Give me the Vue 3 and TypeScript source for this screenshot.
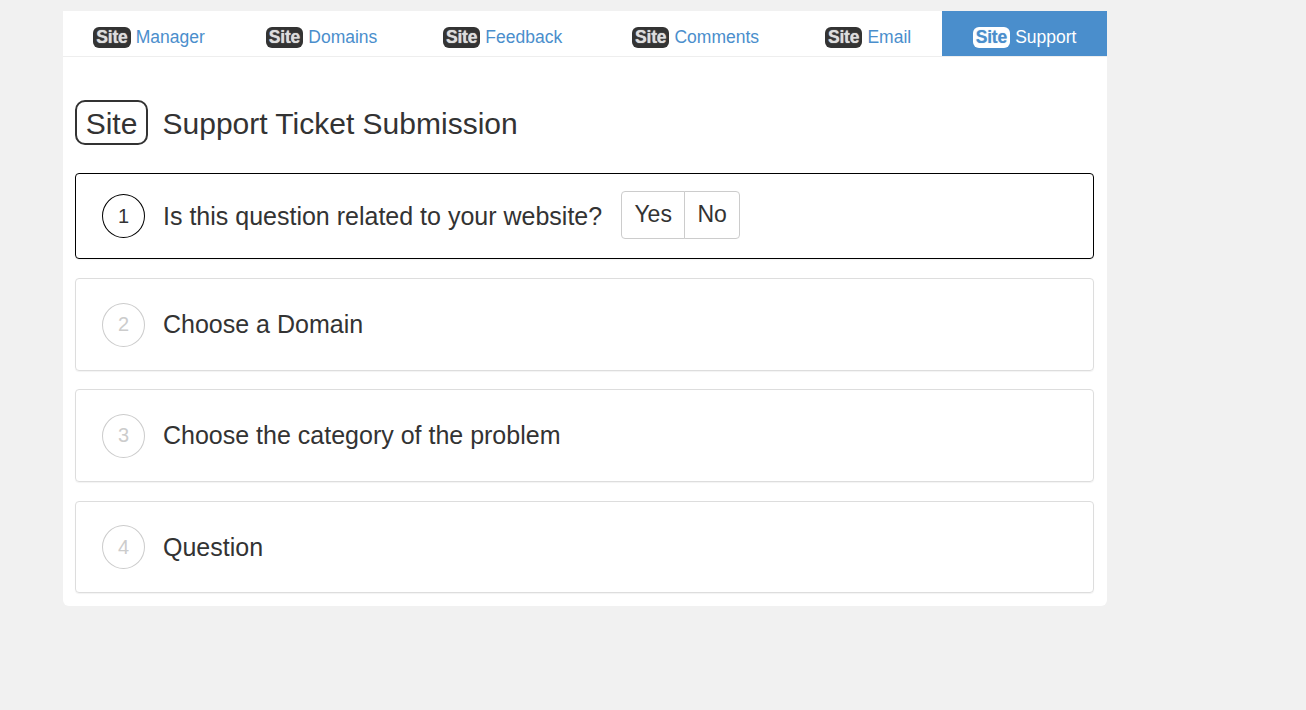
<script setup lang="ts">
const tabs = [
  { name: 'Manager', active: false },
  { name: 'Domains', active: false },
  { name: 'Feedback', active: false },
  { name: 'Comments', active: false },
  { name: 'Email', active: false },
  { name: 'Support', active: true },
]
const steps = [
  { n: 2, text: 'Choose a Domain' },
  { n: 3, text: 'Choose the category of the problem' },
  { n: 4, text: 'Question' },
]
</script>

<template>
  <div class="page">
    <main class="card">
      <nav class="tabs">
        <a v-for="t in tabs" :key="t.name" class="tab" :class="{ active: t.active }">
          <span class="badge">Site</span>
          <span>{{ t.name }}</span>
        </a>
      </nav>
      <div class="body">
        <h1 class="title"><span class="logo">Site</span><span class="title-text">Support Ticket Submission</span></h1>
        <section class="step current">
          <span class="num">1</span>
          <span class="label">Is this question related to your website?</span>
          <div class="choices">
            <button class="choice">Yes</button>
            <button class="choice">No</button>
          </div>
        </section>
        <section v-for="s in steps" :key="s.n" class="step">
          <span class="num">{{ s.n }}</span>
          <span class="label">{{ s.text }}</span>
        </section>
      </div>
    </main>
  </div>
</template>

<style>
html, body { margin: 0; background: #f1f1f1; }
</style>

<style scoped>
.page {
  height: 710px;
  box-sizing: border-box;
  padding: 11px 199px 0 63px;
  font-family: "Liberation Sans", Arial, sans-serif;
  color: #333;
}
.card {
  background: #fff;
  border-radius: 0 0 6px 6px;
  height: 595px;
  box-sizing: border-box;
}
.tabs {
  display: grid;
  grid-template-columns: 172px 173px 189px 197px 148px 165px;
  height: 46px;
  box-sizing: border-box;
  border-bottom: 1px solid #eee;
}
.tab {
  height: 45px;
  display: flex;
  align-items: center;
  justify-content: center;
  gap: 5px;
  font-size: 17.5px;
  color: #4a8ecc;
  padding-top: 7px;
  box-sizing: border-box;
}
.tab.active { background: #4a8ecc; color: #fff; }
.badge {
  display: block;
  width: 37.6px;
  height: 21px;
  line-height: 21px;
  text-align: center;
  background: #333;
  color: #ddd;
  border-radius: 6px;
  font-weight: 700;
  letter-spacing: -0.2px;
  text-shadow: 0 0 1px rgba(255, 255, 255, .7);
}
.active .badge { background: #fff; color: #4a8ecc; text-shadow: 0 0 1px rgba(74, 142, 204, .5); }
.body { padding: 43px 13px 0 12px; }
.title {
  margin: 0 0 28px;
  display: flex;
  align-items: center;
  gap: 14.5px;
  height: 45px;
  font-size: 30px;
  font-weight: 400;
}
.title-text { padding-top: 2px; }
.logo {
  width: 73px;
  height: 45px;
  box-sizing: border-box;
  border: 2px solid #333;
  border-radius: 10px;
  padding-top: 2px;
  display: flex;
  align-items: center;
  justify-content: center;
}
.step {
  height: 92.5px;
  box-sizing: border-box;
  border: 1px solid #ddd;
  border-radius: 4px;
  box-shadow: 0 1px 1px rgba(0, 0, 0, .05);
  margin-bottom: 18.9px;
  padding: 0.6px 0 0 26px;
  display: flex;
  align-items: center;
  font-size: 25px;
  color: #333;
}
.step.current {
  height: 86px;
  padding-top: 0;
  border-color: #000;
  margin-bottom: 19px;
}
.num {
  width: 43px;
  height: 44px;
  box-sizing: border-box;
  border: 1px solid #ccc;
  border-radius: 50%;
  color: #ccc;
  font-size: 20px;
  display: flex;
  align-items: center;
  justify-content: center;
  margin-right: 18px;
}
.current .num { border-color: #000; color: #333; }
.choices { display: flex; margin-left: 19px; margin-top: -2px; }
.choice {
  height: 48px;
  box-sizing: border-box;
  background: #fff;
  border: 1px solid #ccc;
  font: inherit;
  font-size: 23px;
  color: #333;
  padding: 0 0 2px;
}
.choice:first-child { border-radius: 4px 0 0 4px; width: 64px; }
.choice:last-child { border-radius: 0 4px 4px 0; margin-left: -1px; width: 56px; }
</style>
